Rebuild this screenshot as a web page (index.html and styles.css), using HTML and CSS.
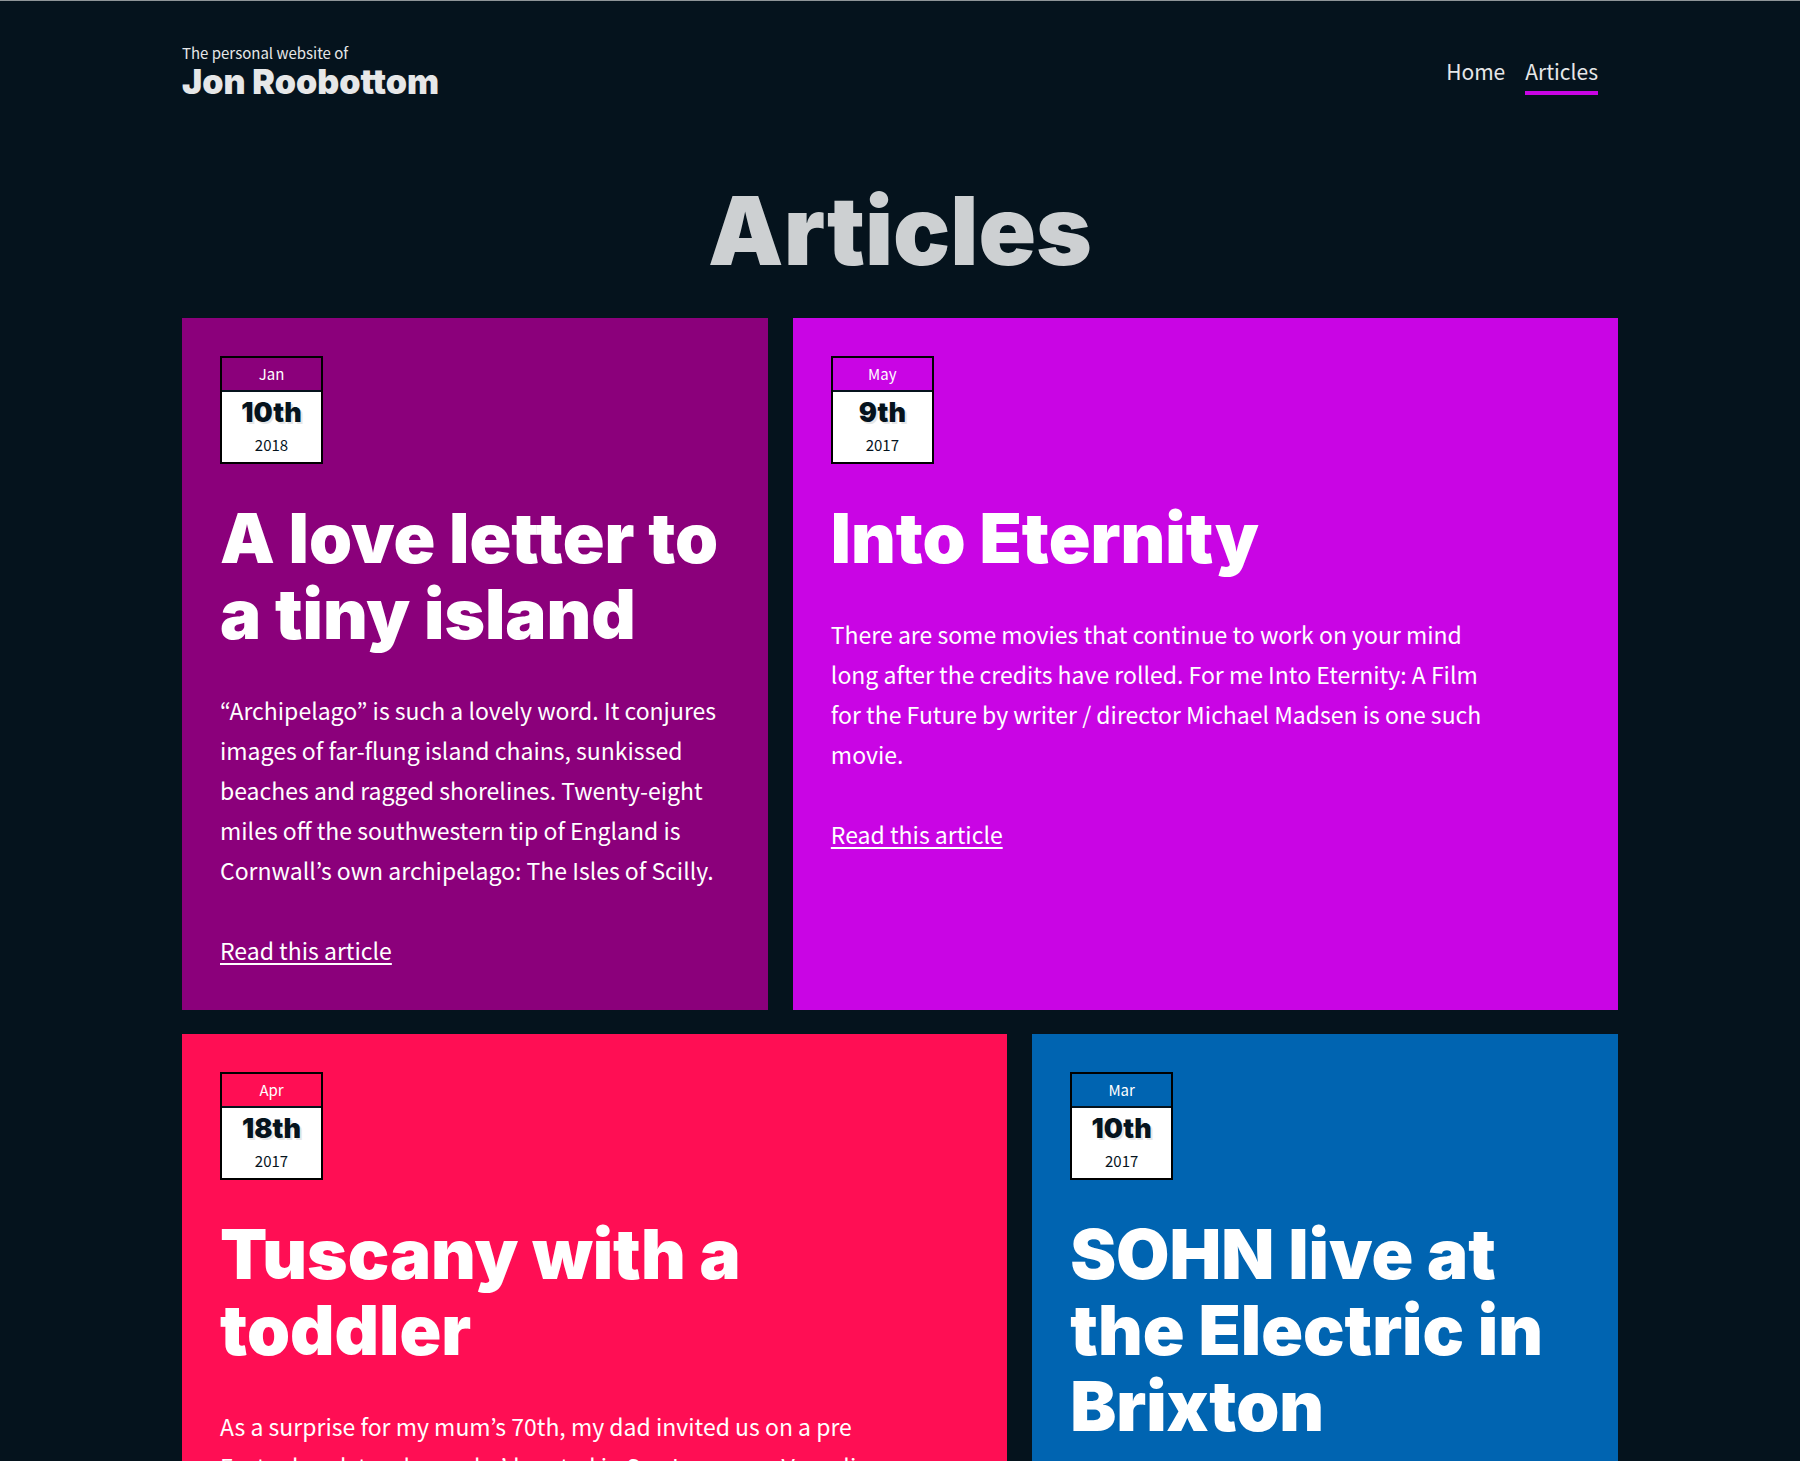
FILE: index.html
```html
<!DOCTYPE html>
<html lang="en">
<head>
<meta charset="utf-8">
<meta name="viewport" content="width=device-width, initial-scale=1">
<title>Articles – Jon Roobottom</title>
<link rel="stylesheet" href="styles.css">
</head>
<body>
<header class="site-header wrap">
  <a class="brand" href="#">
    <span class="brand-intro">The personal website of</span>
    <span class="brand-name">Jon Roobottom</span>
  </a>
  <nav class="site-nav" aria-label="Main">
    <a class="nav-link" href="#">Home</a>
    <a class="nav-link nav-link-current" href="#" aria-current="page">Articles</a>
  </nav>
</header>
<main class="wrap">
  <h1 class="page-title">Articles</h1>
  <div class="row row-narrow-first">
    <article class="card card-plum">
      <time class="date" datetime="2018-01-10">
        <span class="date-month">Jan</span>
        <span class="date-day">10th</span>
        <span class="date-year">2018</span>
      </time>
      <h2 class="card-title">A love letter to a tiny island</h2>
      <p class="card-text">“Archipelago” is such a lovely word. It conjures images of far-flung island chains, sunkissed beaches and ragged shorelines. Twenty-eight miles off the southwestern tip of England is Cornwall’s own archipelago: The Isles of Scilly.</p>
      <a class="card-link" href="#">Read this article</a>
    </article>
    <article class="card card-violet">
      <time class="date" datetime="2017-05-09">
        <span class="date-month">May</span>
        <span class="date-day">9th</span>
        <span class="date-year">2017</span>
      </time>
      <h2 class="card-title">Into Eternity</h2>
      <p class="card-text">There are some movies that continue to work on your mind long after the credits have rolled. For me Into Eternity: A Film for the Future by writer / director Michael Madsen is one such movie.</p>
      <a class="card-link" href="#">Read this article</a>
    </article>
  </div>
  <div class="row row-wide-first">
    <article class="card card-red">
      <time class="date" datetime="2017-04-18">
        <span class="date-month">Apr</span>
        <span class="date-day">18th</span>
        <span class="date-year">2017</span>
      </time>
      <h2 class="card-title">Tuscany with a toddler</h2>
      <p class="card-text">As a surprise for my mum’s 70th, my dad invited us on a pre Easter break to a house he’d rented in San Lorenzo a Vaccoli</p>
    </article>
    <article class="card card-blue">
      <time class="date" datetime="2017-03-10">
        <span class="date-month">Mar</span>
        <span class="date-day">10th</span>
        <span class="date-year">2017</span>
      </time>
      <h2 class="card-title">SOHN live at the Electric in Brixton</h2>
    </article>
  </div>
</main>
</body>
</html>
```

FILE: styles.css
```css
* {
  box-sizing: border-box;
}

body {
  margin: 0;
  border-top: 1px solid #8f9598;
  background: #05131d;
  color: #fff;
  font-family: "Noto Sans CJK KR", "Noto Sans", sans-serif;
  font-size: 23px;
  line-height: 40px;
}

.wrap {
  width: 80%;
  max-width: 1436px;
  margin: 0 auto;
}

.site-header {
  display: flex;
  justify-content: space-between;
  align-items: flex-start;
  padding: 40px 20px 0 0;
}

.brand {
  display: flex;
  flex-direction: column;
  color: #e6e7e8;
  text-decoration: none;
}

.brand-intro {
  font-size: 15px;
  line-height: 24px;
}

.brand-name,
.page-title,
.date-day,
.card-title {
  font-family: Inter, sans-serif;
  font-weight: 900;
  font-variant-ligatures: none;
}

.brand-name {
  font-size: 34px;
  line-height: 34px;
}

.site-nav {
  display: flex;
  gap: 20px;
  padding-top: 14px;
}

.nav-link {
  padding-bottom: 4px;
  border-bottom: 4px solid transparent;
  color: #e6e7e8;
  font-size: 21px;
  line-height: 32px;
  text-decoration: none;
}

.nav-link-current {
  border-bottom-color: #c905e4;
}

.page-title {
  margin: 82px 0 37px;
  color: #cdd0d2;
  font-size: 95px;
  line-height: 100px;
  text-align: center;
}

.row {
  display: grid;
  gap: 25px;
  margin-bottom: 24px;
}

.row-narrow-first {
  grid-template-columns: 71fr 100fr;
}

.row-wide-first {
  grid-template-columns: 100fr 71fr;
}

.card {
  padding: 38px 38px 40px;
}

.card-plum,
.card-plum .date-month {
  background: #8b007b;
}

.card-violet,
.card-violet .date-month {
  background: #c905e4;
}

.card-red,
.card-red .date-month {
  background: #ff0e54;
}

.card-blue,
.card-blue .date-month {
  background: #0064b1;
}

.date {
  display: flex;
  flex-direction: column;
  width: 103px;
  height: 108px;
  border: 2px solid #000;
  background: #fff;
  color: #05131d;
  font-size: 15px;
  line-height: 32px;
  text-align: center;
}

.date-month {
  border-bottom: 2px solid #05131d;
  color: #fff;
}

.date-day {
  padding-top: 5px;
  font-size: 27px;
  line-height: 32px;
  text-shadow: 2px 2px 0 #e6e7e8;
}

.date-year {
  line-height: 32px;
}

.card-title {
  margin: 36px 0 38px;
  font-size: 69px;
  line-height: 76px;
}

.card-text {
  max-width: 664px;
  margin: 0 0 40px;
}

.card-link {
  color: #fff;
  text-decoration-thickness: 2px;
  text-underline-offset: 3px;
}
```
